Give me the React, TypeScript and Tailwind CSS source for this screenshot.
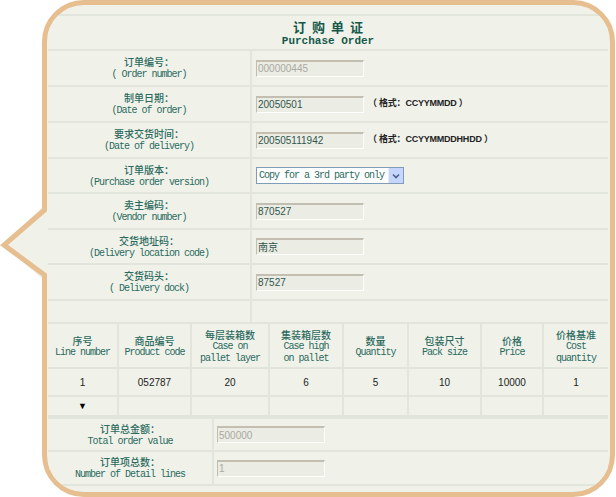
const mono = "font-['Liberation_Mono',monospace] tracking-[-1px]";
const cjk = "font-['Noto_Sans_CJK_SC',sans-serif]";
const cell = "bg-[#f0f2ea]";

type Row = { zh: string; en: string; h: string; value?: string; disabled?: boolean; hint?: string; select?: boolean };

const rows: Row[] = [
    { zh: "订单编号：", en: "( Order number)", h: "h-[34px]", value: "000000445", disabled: true },
    { zh: "制单日期：", en: "(Date of order)", h: "h-[34px]", value: "20050501", hint: "CCYYMMDD" },
    { zh: "要求交货时间：", en: "(Date of delivery)", h: "h-[34px]", value: "200505111942", hint: "CCYYMMDDHHDD" },
    { zh: "订单版本：", en: "(Purchase order version)", h: "h-[33px]", select: true },
    { zh: "卖主编码：", en: "(Vendor number)", h: "h-[34px]", value: "870527" },
    { zh: "交货地址码：", en: "(Delivery location code)", h: "h-[33px]", value: "南京" },
    { zh: "交货码头：", en: "( Delivery dock)", h: "h-[34px]", value: "87527" },
];

const heads = [
    { zh: "序号", en: ["Line number"] },
    { zh: "商品编号", en: ["Product code"] },
    { zh: "每层装箱数", en: ["Case on", "pallet layer"] },
    { zh: "集装箱层数", en: ["Case high", "on pallet"] },
    { zh: "数量", en: ["Quantity"] },
    { zh: "包装尺寸", en: ["Pack size"] },
    { zh: "价格", en: ["Price"] },
    { zh: "价格基准", en: ["Cost", "quantity"] },
];

const data = ["1", "052787", "20", "6", "5", "10", "10000", "1"];

const Label = ({ zh, en }: { zh: string; en: string }) => (
    <div className={`${cell} flex flex-col items-center justify-center leading-[13px] text-[#2b6a5e]`}>
        <span className={`${cjk} text-[10px] font-medium`}>{zh}</span>
        <span className={`${mono} text-[10px]`}>{en}</span>
    </div>
);

const Field = ({ value, disabled, w }: { value: string; disabled?: boolean; w: string }) => (
    <div
        className={`${w} h-[17px] bg-[#ebece3] border-t-2 border-l border-t-[#c2bfb2] border-l-[#c2bfb2] border-r border-b border-r-white border-b-white flex items-center pl-[1px] text-[10px] font-['Liberation_Sans','Noto_Sans_CJK_SC',sans-serif] ${disabled ? "text-[#a9aaa2]" : "text-[#31574f]"}`}
    >
        {value}
    </div>
);

const Select = () => (
    <div className="w-[148px] h-[17px] border border-[#7f9db9] bg-white flex items-center">
        <span className={`${mono} flex-1 pl-[2px] text-[10px] text-[#2b6a5e]`}>Copy for a 3rd party only</span>
        <span className="w-[15px] h-[15px] bg-[#c6d5fb] border-l border-[#e6ecfd] flex items-center justify-center">
            <svg width="8" height="6" viewBox="0 0 8 6">
                <path d="M1 1.5 L4 4.5 L7 1.5" fill="none" stroke="#4d6185" strokeWidth="1.6" />
            </svg>
        </span>
    </div>
);

export default function App() {
    return (
        <div className="relative w-[616px] h-[497px] bg-white">
            <div className="ml-[42px] w-[573px] h-[497px] rounded-[42px] border-[5px] border-[#e6be8f] bg-[#f0f2ea] overflow-hidden">
                <div className="mt-[9px] ml-px mr-[2px] bg-[#e2e5dc] flex flex-col gap-[2px] py-[2px]">
                    <div className={`${cell} h-[33px] flex flex-col items-center justify-center text-[#16594b]`}>
                        <span className={`${cjk} text-[13px] leading-[16px] font-bold tracking-[6px] pl-[6px]`}>订购单证</span>
                        <span className="font-['Liberation_Mono',monospace] text-[11px] leading-[12px] font-bold">Purchase Order</span>
                    </div>

                    {rows.map((r) => (
                        <div key={r.zh} className={`grid grid-cols-[202px_1fr] gap-[2px] ${r.h}`}>
                            <Label zh={r.zh} en={r.en} />
                            <div className={`${cell} flex items-center pl-1`}>
                                {r.select ? <Select /> : <Field value={r.value ?? ""} disabled={r.disabled} w="w-[108px]" />}
                                {r.hint && (
                                    <span className="ml-1 text-[9px] text-[#222] font-bold font-['Liberation_Sans','Noto_Sans_CJK_SC',sans-serif] tracking-tight">
                                        （ 格式：{r.hint} ）
                                    </span>
                                )}
                            </div>
                        </div>
                    ))}

                    <div className="grid grid-cols-[202px_1fr] gap-[2px] h-[21px]">
                        <div className={cell} />
                        <div className={cell} />
                    </div>

                    <div className="grid grid-cols-[69px_71px_76px_72px_63px_71px_60px_1fr] gap-[2px]">
                        {heads.map((h) => (
                            <div key={h.zh} className={`${cell} h-[43px] flex flex-col items-center justify-center leading-[12px] text-[#2b6a5e] pt-[2px]`}>
                                <span className={`${cjk} text-[10px] font-medium`}>{h.zh}</span>
                                {h.en.map((e) => (
                                    <span key={e} className={`${mono} text-[10px] whitespace-nowrap`}>{e}</span>
                                ))}
                            </div>
                        ))}
                        {data.map((d, i) => (
                            <div key={i} className={`${cell} h-[26px] flex items-center justify-center text-[10px] text-[#222] font-['Liberation_Sans',sans-serif]`}>
                                {d}
                            </div>
                        ))}
                        {data.map((_, i) => (
                            <div key={i} className={`${cell} h-[18px] flex items-center justify-center text-[9px] text-black`}>
                                {i === 0 ? "▼" : ""}
                            </div>
                        ))}
                    </div>

                    <div className="grid grid-cols-[164px_1fr] gap-[2px] mt-[2px]">
                        <Label zh="订单总金额：" en="Total order value" />
                        <div className={`${cell} h-[31px] flex items-center pl-[3px]`}>
                            <Field value="500000" disabled w="w-[108px]" />
                        </div>
                        <Label zh="订单项总数：" en="Number of Detail lines" />
                        <div className={`${cell} h-[32px] flex items-center pl-[3px]`}>
                            <Field value="1" disabled w="w-[108px]" />
                        </div>
                    </div>
                </div>
            </div>

            <svg className="absolute left-0 top-[200px]" width="48" height="85" viewBox="0 0 48 85">
                <polygon points="41,8 4,45 41,78 48,78 48,8" fill="#f0f2ea" />
                <polyline points="44.5,0 44.5,10 4,45 44.5,75 44.5,85" fill="none" stroke="#e6be8f" strokeWidth="5" />
            </svg>
        </div>
    );
}
